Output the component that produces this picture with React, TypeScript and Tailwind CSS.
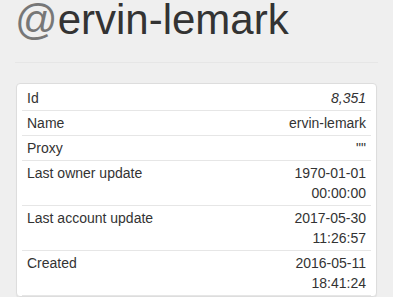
import React from 'react';

interface Row {
    label: string;
    value: string[];
    italic?: boolean;
}

const rows: Row[] = [
    { label: 'Id', value: ['8,351'], italic: true },
    { label: 'Name', value: ['ervin-lemark'] },
    { label: 'Proxy', value: ['""'] },
    { label: 'Last owner update', value: ['1970-01-01', '00:00:00'] },
    { label: 'Last account update', value: ['2017-05-30', '11:26:57'] },
    { label: 'Created', value: ['2016-05-11', '18:41:24'] },
];

const App: React.FC = () => {
    return (
        <div className="min-h-screen bg-[#efefef] font-['Liberation_Sans',Arial,sans-serif] text-[#333]">
            <h1 className="px-[15px] pt-[1px] text-[42px] leading-[38px] text-[#333]">
                <span className="text-[#777]">@</span>ervin-lemark
            </h1>
            <hr className="mx-[15px] mt-[23px] border-t border-[#e6e6e6]" />

            {/* Account panel */}
            <div className="mx-[16px] mt-[20px] rounded-[4px] border border-[#ddd] bg-white px-[5px] pt-[1px] shadow-[0_1px_1px_rgba(0,0,0,0.05)]">
                {rows.map((row, i) => (
                    <div
                        key={row.label}
                        className={`flex justify-between px-[5px] py-[2px] text-[14px] leading-[20px] ${i > 0 ? 'border-t border-[#e6e6e6]' : 'border-t border-transparent'}`}
                    >
                        <span>{row.label}</span>
                        <span className={`w-[100px] text-right ${row.italic ? 'italic' : ''}`}>
                            {row.value.map(v => (
                                <span key={v} className="block">{v}</span>
                            ))}
                        </span>
                    </div>
                ))}
                <div className="border-t border-[#e6e6e6]" />
            </div>
        </div>
    );
};

export default App;
